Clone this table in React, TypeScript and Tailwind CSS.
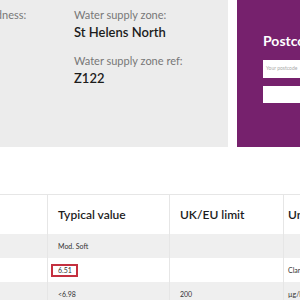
export default function App() {
  const rows = [
    { name: "Hardness", typical: "Mod. Soft", limit: "", unit: "", shade: true },
    { name: "pH", typical: "6.51", limit: "", unit: "Clarke", shade: false, flag: true },
    { name: "Sodium", typical: "<6.98", limit: "200", unit: "µg/l", shade: true },
  ];

  return (
    <div className="h-[300px] w-[300px] overflow-hidden bg-white font-['Lato',sans-serif]">
      {/* Zone summary + postcode search */}
      <div className="flex h-[147px] gap-[9px]">
        <div className="flex w-[228px] shrink-0 bg-[#ececec] pt-[8px]">
          <div className="-ml-[52px] w-[126px] shrink-0 text-[11px] leading-[14px] text-[#777]">
            Water hardness:
          </div>
          <div className="flex flex-col">
            <div className="text-[11px] leading-[14px] text-[#777]">Water supply zone:</div>
            <div className="mt-[1px] text-[13px] leading-[18px] font-semibold text-[#1c1c1c] whitespace-nowrap">
              St Helens North
            </div>
            <div className="mt-[13px] text-[11px] leading-[14px] text-[#777]">
              Water supply zone ref:
            </div>
            <div className="mt-[1px] text-[13px] leading-[18px] font-semibold text-[#1c1c1c]">
              Z122
            </div>
          </div>
        </div>
        <div className="w-[200px] shrink-0 bg-[#76216d] pl-[26px] pt-[31px]">
          <div className="text-[14px] leading-[20px] font-bold text-white whitespace-nowrap">Postcode search</div>
          <div className="mt-[9px] flex h-[18px] w-[150px] items-center bg-white px-[3px] text-[5px] text-[#aaa]">
            Your postcode
          </div>
          <div className="mt-[8px] h-[17px] w-[150px] bg-white" />
        </div>
      </div>

      {/* Results table */}
      <div className="mt-[47px] -ml-[80px] border-t border-[#e6e6e6]">
        <div className="grid grid-cols-[127px_122px_114px_100px]">
          <div className="flex h-[39px] items-center pl-[10px] text-[12px] font-semibold text-[#1c1c1c]">
            Parameter
          </div>
          <div className="flex h-[39px] items-center border-l border-[#e6e6e6] pl-[10px] text-[12px] font-semibold text-[#1c1c1c]">
            Typical value
          </div>
          <div className="flex h-[39px] items-center border-l border-[#e6e6e6] pl-[10px] text-[12px] font-semibold text-[#1c1c1c]">
            UK/EU limit
          </div>
          <div className="flex h-[39px] items-center border-l border-[#e6e6e6] pl-[4px] text-[12px] font-semibold text-[#1c1c1c]">
            Units
          </div>
          {rows.map((r) => (
            <div key={r.name} className="contents">
              <div className={`flex h-[24px] items-center pl-[10px] text-[7px] text-[#333] ${r.shade ? "bg-[#efefef]" : "bg-white"}`}>
                {r.name}
              </div>
              <div className={`flex h-[24px] items-center border-l border-[#e6e6e6] pl-[10px] text-[7px] text-[#333] ${r.shade ? "bg-[#efefef]" : "bg-white"}`}>
                {r.flag ? (
                  <span className="-ml-[7px] flex h-[13px] w-[27px] items-center border-2 border-[#c4303f] pl-[5px]">
                    {r.typical}
                  </span>
                ) : (
                  r.typical
                )}
              </div>
              <div className={`flex h-[24px] items-center border-l border-[#e6e6e6] pl-[10px] text-[7px] text-[#333] ${r.shade ? "bg-[#efefef]" : "bg-white"}`}>
                {r.limit}
              </div>
              <div className={`flex h-[24px] items-center border-l border-[#e6e6e6] pl-[4px] text-[7px] text-[#333] ${r.shade ? "bg-[#efefef]" : "bg-white"}`}>
                {r.unit}
              </div>
            </div>
          ))}
        </div>
      </div>
    </div>
  );
}
